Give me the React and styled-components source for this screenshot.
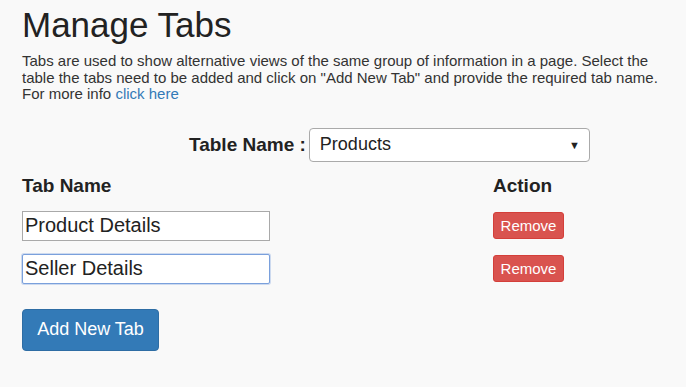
import React from 'react';
import styled, { createGlobalStyle } from 'styled-components';

const GlobalStyle = createGlobalStyle`
  html, body {
    margin: 0;
    padding: 0;
    background: #f9f9f9;
  }
  body {
    font-family: 'Liberation Sans', Arial, sans-serif;
    color: #333;
  }
`;

const Page = styled.div`
  padding: 0 22px;
`;

const Title = styled.h1`
  margin: 0;
  padding-top: 7px;
  font-size: 35px;
  font-weight: 400;
  line-height: 36px;
  color: #222;
`;

const Intro = styled.p`
  margin: 10px 0 0;
  font-size: 15px;
  line-height: 16.5px;
  color: #333;
  white-space: nowrap;
`;

const Link = styled.a`
  color: #337ab7;
  text-decoration: none;
`;

const TableRow = styled.div`
  display: flex;
  align-items: center;
  gap: 3px;
  margin: 25px 0 0 167px;
`;

const Label = styled.span`
  font-size: 19px;
  font-weight: 700;
  color: #222;
`;

const SelectBox = styled.div`
  display: flex;
  align-items: center;
  justify-content: space-between;
  box-sizing: border-box;
  width: 281px;
  height: 34px;
  padding: 0 9px 0 10px;
  background: #fff;
  border: 1px solid #aaa;
  border-radius: 4px;
  font-size: 18px;
  color: #222;
`;

const Arrow = styled.span`
  font-size: 11px;
  color: #222;
`;

const Grid = styled.div`
  display: grid;
  grid-template-columns: 471px auto;
  align-items: center;
  margin-top: 8px;
  row-gap: 13px;
`;

const HeadCell = styled.div`
  font-size: 19px;
  font-weight: 700;
  color: #222;
  line-height: 32px;
  margin-bottom: -4px;
`;

const NameInput = styled.input`
  box-sizing: border-box;
  width: 248px;
  height: 30px;
  padding: 0 2px;
  font-family: 'Liberation Sans', Arial, sans-serif;
  font-size: 20px;
  color: #222;
  background: #fff;
  border: 1px solid ${({ $focused }) => ($focused ? '#7aa0dc' : '#a9a9a9')};
  border-radius: ${({ $focused }) => ($focused ? '2px' : '0')};
  box-shadow: ${({ $focused }) => ($focused ? '0 0 0 1px rgba(122,160,220,0.35)' : 'none')};
  outline: none;
`;

const RemoveButton = styled.button`
  box-sizing: border-box;
  width: 71px;
  height: 27px;
  padding: 0;
  font-family: 'Liberation Sans', Arial, sans-serif;
  font-size: 15px;
  color: #fff;
  background: #d9534f;
  border: 1px solid #d43f3a;
  border-radius: 3px;
`;

const AddButton = styled.button`
  margin-top: 25px;
  box-sizing: border-box;
  width: 137px;
  height: 42px;
  padding: 0;
  font-family: 'Liberation Sans', Arial, sans-serif;
  font-size: 18px;
  color: #fff;
  background: #337ab7;
  border: 1px solid #2e6da4;
  border-radius: 4px;
`;

const tabs = [
  { name: 'Product Details', focused: false },
  { name: 'Seller Details', focused: true },
];

const App = () => {
  return (
    <Page>
      <GlobalStyle />
      <Title>Manage Tabs</Title>
      <Intro>
        Tabs are used to show alternative views of the same group of information in a page. Select the
        <br />
        table the tabs need to be added and click on "Add New Tab" and provide the required tab name.
        <br />
        For more info <Link href="#">click here</Link>
      </Intro>
      <TableRow>
        <Label>Table Name :</Label>
        <SelectBox>
          <span>Products</span>
          <Arrow>▼</Arrow>
        </SelectBox>
      </TableRow>
      <Grid>
        <HeadCell>Tab Name</HeadCell>
        <HeadCell>Action</HeadCell>
        {tabs.map((tab) => (
          <React.Fragment key={tab.name}>
            <div>
              <NameInput defaultValue={tab.name} $focused={tab.focused} />
            </div>
            <div>
              <RemoveButton>Remove</RemoveButton>
            </div>
          </React.Fragment>
        ))}
      </Grid>
      <AddButton>Add New Tab</AddButton>
    </Page>
  );
};

export default App;
